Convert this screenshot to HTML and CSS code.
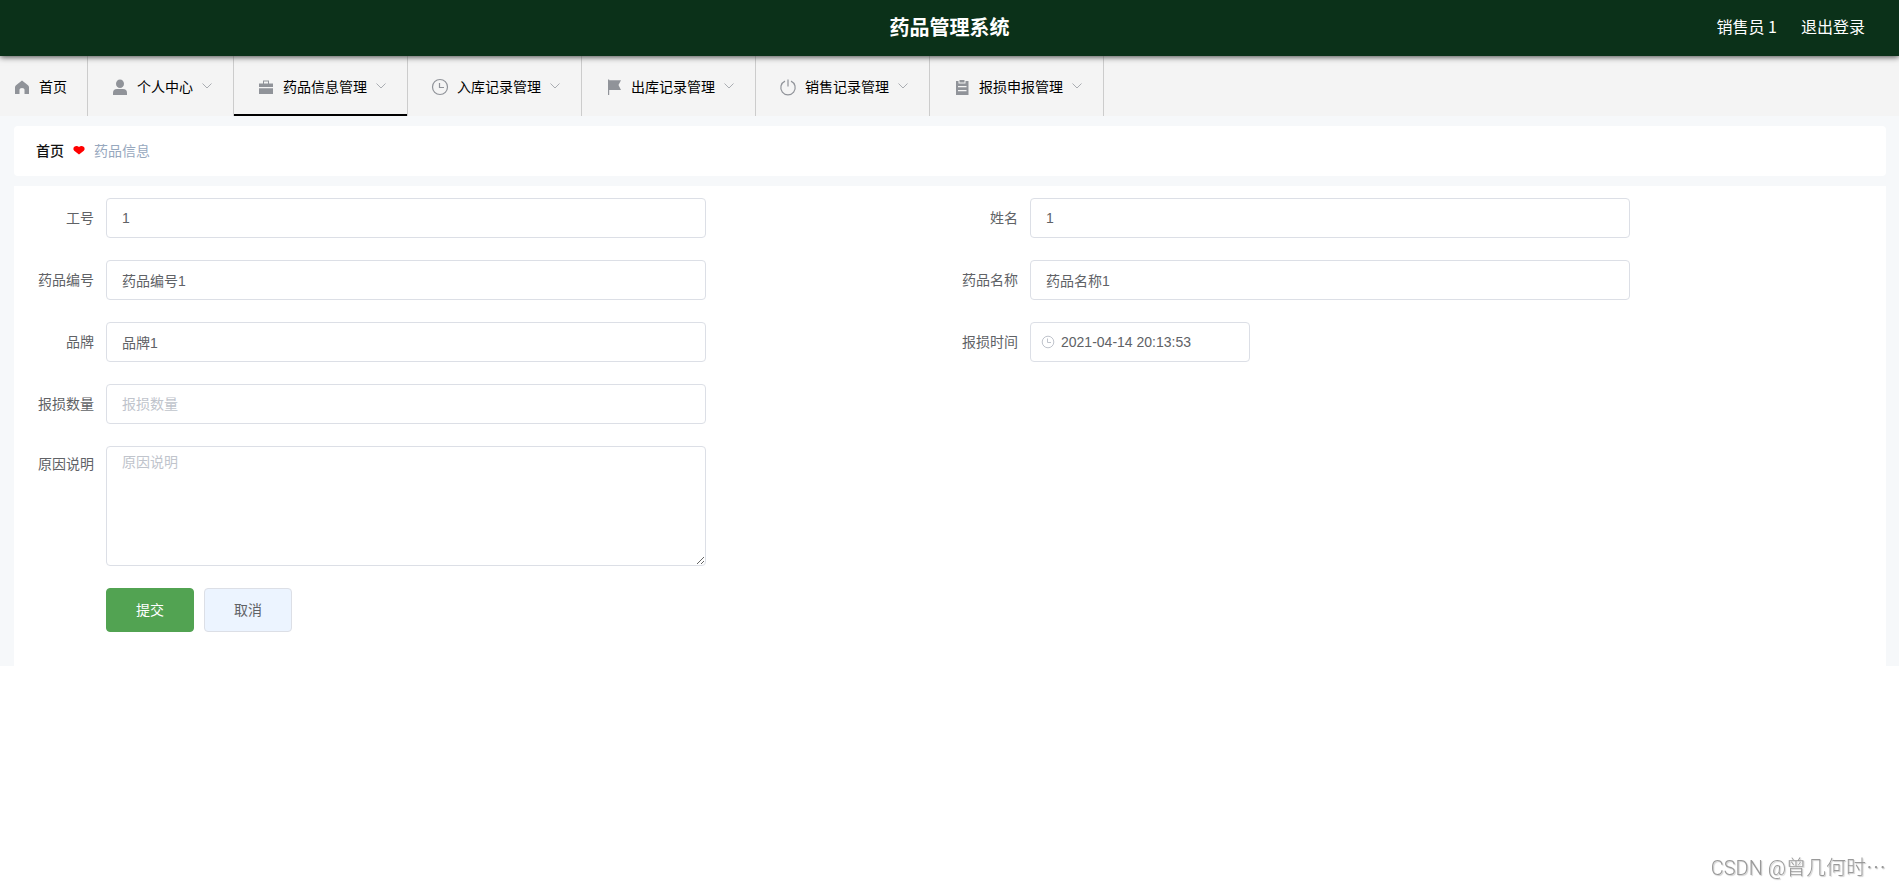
FILE: index.html
```html
<!DOCTYPE html>
<html lang="zh-CN">
<head>
<meta charset="utf-8">
<title>药品管理系统</title>
<link rel="stylesheet" href="styles.css">
</head>
<body>
<header class="header">
  <h1 class="header-title">药品管理系统</h1>
  <div class="header-user">
    <span>销售员 1</span>
    <a class="header-link" href="#">退出登录</a>
  </div>
</header>

<nav class="nav">
  <a class="nav-item nav-home" href="#">
    <svg class="nav-icon" viewBox="0 0 24 24"><path d="M12 5.500 18 10.200Q19 11 19 12.300V19H14.500V14.500Q14.500 13 12 13T9.500 14.500V19H5V12.300Q5 11 6 10.200Z"/></svg>
    <span class="nav-text">首页</span>
  </a>
  <a class="nav-item" href="#">
    <svg class="nav-icon" viewBox="0 0 24 24"><ellipse cx="12" cy="8.800" rx="4" ry="4.300"/><path d="M5 20V18Q5 14 9 14H15Q19 14 19 18V20Z"/></svg>
    <span class="nav-text">个人中心</span>
    <svg class="nav-arrow" viewBox="0 0 12 12"><path d="M1.500 3.500 6 8l4.500-4.500"/></svg>
  </a>
  <a class="nav-item active" href="#">
    <svg class="nav-icon" viewBox="0 0 24 24"><path d="M9 8.500V5.500H15V8.500H19V12H5V8.500ZM10 6.500V8.500H14V6.500ZM5 13.200H19V19H5Z" fill-rule="evenodd"/></svg>
    <span class="nav-text">药品信息管理</span>
    <svg class="nav-arrow" viewBox="0 0 12 12"><path d="M1.500 3.500 6 8l4.500-4.500"/></svg>
  </a>
  <a class="nav-item" href="#">
    <svg class="nav-icon line" viewBox="0 0 24 24"><circle cx="12" cy="12" r="7.500"/><path d="M11.500 8V12.500H16"/></svg>
    <span class="nav-text">入库记录管理</span>
    <svg class="nav-arrow" viewBox="0 0 12 12"><path d="M1.500 3.500 6 8l4.500-4.500"/></svg>
  </a>
  <a class="nav-item" href="#">
    <svg class="nav-icon" viewBox="0 0 24 24"><path d="M6 4.500H7.200V5.200H19L16.500 10 19 15H7.200V20H6Z"/></svg>
    <span class="nav-text">出库记录管理</span>
    <svg class="nav-arrow" viewBox="0 0 12 12"><path d="M1.500 3.500 6 8l4.500-4.500"/></svg>
  </a>
  <a class="nav-item" href="#">
    <svg class="nav-icon line" viewBox="0 0 24 24"><path d="M12 4.500V11.500M9 6.100A7.200 7.200 0 1 0 15 6.100"/></svg>
    <span class="nav-text">销售记录管理</span>
    <svg class="nav-arrow" viewBox="0 0 12 12"><path d="M1.500 3.500 6 8l4.500-4.500"/></svg>
  </a>
  <a class="nav-item" href="#">
    <svg class="nav-icon" viewBox="0 0 24 24"><path d="M6 6H8.500V8.500H15.500V6H18.500V20H6ZM9.500 5H14.500V7.500H9.500ZM8 11V12.200H16.500V11ZM8 15V16.200H16.500V15Z" fill-rule="evenodd"/></svg>
    <span class="nav-text">报损申报管理</span>
    <svg class="nav-arrow" viewBox="0 0 12 12"><path d="M1.500 3.500 6 8l4.500-4.500"/></svg>
  </a>
</nav>

<main class="main">
  <div class="breadcrumb">
    <a class="crumb-home" href="#">首页</a>
    <svg class="heart" viewBox="0 0 12 10"><path d="M6 9.500 1.200 5.800Q0 4.500 .500 2.700 1.500 .800 3.500 .900 5 1 6 2 7 1 8.500 .900 10.500 .800 11.500 2.700 12 4.500 10.800 5.800Z"/></svg>
    <span>药品信息</span>
  </div>

  <form class="form">
    <div class="field">
      <label class="label" for="job">工号</label>
      <input class="input" id="job" type="text" value="1">
    </div>
    <div class="field">
      <label class="label" for="name">姓名</label>
      <input class="input" id="name" type="text" value="1">
    </div>
    <div class="field">
      <label class="label" for="code">药品编号</label>
      <input class="input" id="code" type="text" value="药品编号1">
    </div>
    <div class="field">
      <label class="label" for="drug">药品名称</label>
      <input class="input" id="drug" type="text" value="药品名称1">
    </div>
    <div class="field">
      <label class="label" for="brand">品牌</label>
      <input class="input" id="brand" type="text" value="品牌1">
    </div>
    <div class="field">
      <label class="label" for="time">报损时间</label>
      <div class="date">
        <svg class="date-icon" viewBox="0 0 14 14"><circle cx="7" cy="7" r="5.800"/><path d="M6.500 3.500V7.500H10"/></svg>
        <input class="date-input" id="time" type="text" value="2021-04-14 20:13:53">
      </div>
    </div>
    <div class="field wide">
      <label class="label" for="count">报损数量</label>
      <input class="input" id="count" type="text" placeholder="报损数量">
    </div>
    <div class="field wide">
      <label class="label label-top" for="reason">原因说明</label>
      <textarea class="input textarea" id="reason" placeholder="原因说明"></textarea>
    </div>
    <div class="actions wide">
      <button class="button primary" type="submit">提交</button>
      <button class="button" type="button">取消</button>
    </div>
  </form>
</main>

<div class="watermark">CSDN @曾几何时⋯</div>
</body>
</html>
```
FILE: styles.css
```css
* {
  box-sizing: border-box;
}

body {
  margin: 0;
  background: #fff;
  color: #606266;
  font-family: "Liberation Sans", "Noto Sans CJK SC", sans-serif;
  font-size: 14px;
}

a {
  color: inherit;
  text-decoration: none;
}

.header {
  position: relative;
  display: grid;
  grid-template-columns: 1fr auto 1fr;
  align-items: center;
  height: 56px;
  padding: 0 34px 2px;
  background: #0b3119;
  color: #fff;
  box-shadow: 0 1px 6px #444;
  font-family: "Noto Sans CJK SC", sans-serif;
}

.header-title {
  grid-column: 2;
  margin: 0;
  font-size: 20px;
  line-height: 28px;
}

.header-user {
  display: flex;
  justify-content: flex-end;
  gap: 24px;
  padding-bottom: 2px;
  font-size: 16px;
  line-height: 24px;
}

.nav {
  display: flex;
  height: 60px;
  background: #f4f4f4;
  color: #000;
}

.nav-item {
  display: flex;
  align-items: center;
  padding: 2px 20px 0;
  border-right: 1px solid #ccc;
  white-space: nowrap;
}

.nav-home {
  padding-left: 10px;
}

.nav-item.active {
  box-shadow: inset 0 -2px #000;
}

.nav-text {
  padding-bottom: 2px;
}

.nav-icon {
  width: 24px;
  height: 24px;
  margin-right: 5px;
  fill: #909399;
}

.nav-icon.line {
  fill: none;
  stroke: #909399;
  stroke-width: 1.2;
}

.nav-arrow {
  width: 12px;
  height: 12px;
  margin: 0 0 2px 8px;
  fill: none;
  stroke: #aaadb2;
}

.main {
  display: flex;
  flex-direction: column;
  gap: 10px;
  padding: 10px 13px 0 14px;
  background: #f6f8fa;
}

.breadcrumb {
  display: flex;
  align-items: center;
  height: 50px;
  padding: 0 22px 2px;
  border-radius: 4px;
  background: #fff;
  color: #97a8be;
}

.crumb-home {
  color: #111;
  font-weight: 500;
}

.heart {
  width: 12px;
  height: 10px;
  margin: 0 9px;
  fill: #f00;
}

.form {
  display: grid;
  grid-template-columns: 1fr 1fr;
  row-gap: 22px;
  padding: 12px 12px 34px;
  background: #fff;
}

.field {
  display: flex;
}

.wide {
  grid-column: 1 / -1;
}

.label {
  flex: 0 0 80px;
  padding-right: 12px;
  line-height: 40px;
  text-align: right;
}

.label-top {
  line-height: 36px;
}

.input {
  width: 600px;
  height: 40px;
  padding: 0 15px;
  border: 1px solid #dcdfe6;
  border-radius: 4px;
  background: #fff;
  color: #606266;
  font: inherit;
}

.textarea {
  height: 120px;
  padding: 5px 15px;
  line-height: 21px;
  resize: both;
}

.input::placeholder {
  color: #c0c4cc;
}

.date {
  display: flex;
  align-items: center;
  width: 220px;
  height: 40px;
  padding: 0 10px;
  border: 1px solid #dcdfe6;
  border-radius: 4px;
}

.date-icon {
  flex: none;
  width: 14px;
  height: 14px;
  margin-right: 6px;
  fill: none;
  stroke: #c0c4cc;
}

.date-input {
  width: 100%;
  padding: 0;
  border: 0;
  background: none;
  color: #606266;
  font: inherit;
}

.actions {
  display: flex;
  gap: 10px;
  padding-left: 80px;
}

.button {
  width: 88px;
  height: 44px;
  padding: 0 0 2px;
  border: 1px solid #dcdfe6;
  border-radius: 4px;
  background: #ecf4ff;
  color: #606266;
  font: inherit;
}

.button.primary {
  border-color: #52a352;
  background: #52a352;
  color: #fff;
}

.watermark {
  position: fixed;
  right: 13px;
  bottom: 5px;
  color: #999;
  font-family: Roboto, "Noto Sans CJK SC", sans-serif;
  font-size: 20px;
  font-weight: 300;
  line-height: 28px;
  text-shadow: 1px 1px 1px #ccc;
}
```
